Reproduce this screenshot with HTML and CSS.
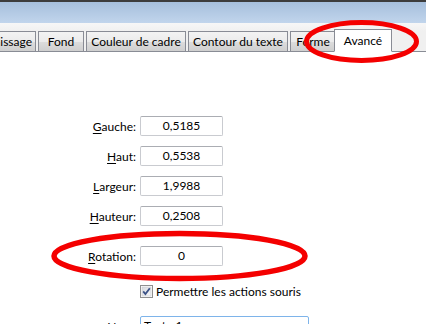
FILE: index.html
```html
<!DOCTYPE html>
<html lang="fr">
<head>
    <meta charset="UTF-8">
    <meta name="viewport" content="width=device-width, initial-scale=1.0">
    <title>Propriétés - Avancé</title>
    <link rel="stylesheet" href="styles.css">
</head>
<body>
    <div class="window">
        <div class="titlebar"></div>
        <div class="tabstrip">
            <div class="tabs">
                <span class="tab tab-first">Remplissage</span>
                <span class="tab tab-short">Fond</span>
                <span class="tab tab-long">Couleur de cadre</span>
                <span class="tab tab-long">Contour du texte</span>
                <span class="tab tab-short">Forme</span>
                <span class="tab active">Avancé</span>
            </div>
        </div>
        <div class="panel">
            <div class="row">
                <label class="label"><u>G</u>auche:</label>
                <div class="input">0,5185</div>
            </div>
            <div class="row">
                <label class="label"><u>H</u>aut:</label>
                <div class="input">0,5538</div>
            </div>
            <div class="row">
                <label class="label"><u>L</u>argeur:</label>
                <div class="input">1,9988</div>
            </div>
            <div class="row">
                <label class="label"><u>H</u>auteur:</label>
                <div class="input">0,2508</div>
            </div>
            <div class="row row-spaced">
                <label class="label"><u>R</u>otation:</label>
                <div class="input">0</div>
            </div>
            <div class="row row-check">
                <span class="label"></span>
                <div class="check">
                    <svg class="checkbox" width="13" height="13" viewBox="0 0 13 13">
                        <defs>
                            <linearGradient id="cb" x1="0" y1="0" x2="1" y2="1">
                                <stop offset="0" stop-color="#d6d9de"/>
                                <stop offset="1" stop-color="#f7f8fa"/>
                            </linearGradient>
                        </defs>
                        <rect x="0.5" y="0.5" width="12" height="12" fill="#fff" stroke="#8e8f8f"/>
                        <rect x="2" y="2" width="9" height="9" fill="url(#cb)" stroke="#c6c8cc" stroke-width="0.6"/>
                        <path d="M3.2 6.4 L5.4 9 L9.8 3.2" fill="none" stroke="#3b5287" stroke-width="1.8"/>
                    </svg>
                    <span>Permettre les actions souris</span>
                </div>
            </div>
            <div class="row row-name">
                <label class="label"><u>N</u>om:</label>
                <div class="input input-wide">Texte 1</div>
            </div>
        </div>
        <svg class="marks" width="426" height="324" viewBox="0 0 426 324">
            <ellipse cx="361.5" cy="41.5" rx="55" ry="19" fill="none" stroke="#f40000" stroke-width="5"/>
            <ellipse cx="179.5" cy="256" rx="125.5" ry="22.5" fill="none" stroke="#f40000" stroke-width="5.5"/>
        </svg>
    </div>
</body>
</html>
```

FILE: styles.css
```css
* {
    margin: 0;
    padding: 0;
    box-sizing: border-box;
}

body {
    font-family: Lato, 'Noto Sans', sans-serif;
    font-size: 12px;
    color: #000;
    background: #fff;
}

.window {
    position: relative;
    width: 426px;
    height: 324px;
    overflow: hidden;
    background: #fff;
}

.titlebar {
    height: 23px;
    border-top: 2px solid #3c3c3c;
    background: linear-gradient(180deg, #a6bfdc, #c1d5ec);
}

.tabstrip {
    height: 29px;
    background: linear-gradient(180deg, #f7f7f7, #f0f0f0 30%);
    border-bottom: 1px solid #898c95;
    display: flex;
    align-items: flex-end;
}

.tabs {
    display: flex;
    align-items: flex-end;
    gap: 2px;
    margin-left: -44px;
    margin-bottom: -1px;
}

.tab {
    height: 21px;
    line-height: 19px;
    text-align: center;
    border: 1px solid #898c95;
    background: linear-gradient(180deg, #f3f3f3 0%, #ebebeb 50%, #dddddd 51%, #cfcfcf 100%);
    white-space: nowrap;
    overflow: hidden;
}

.tab-first {
    width: 80px;
    text-align: right;
    padding-right: 3px;
}

.tab-short {
    width: 46px;
}

.tab-long {
    width: 100px;
}

.tab.active {
    width: 58px;
    height: 23px;
    margin-left: -4px;
    line-height: 21px;
    background: #fff;
    border-bottom-color: #fff;
    position: relative;
}

.panel {
    padding-top: 64px;
}

.row {
    display: flex;
    align-items: center;
    gap: 4px;
    height: 20px;
    margin-top: 10px;
}

.row:first-child {
    margin-top: 0;
}

.row-spaced {
    margin-top: 20px;
}

.row-check {
    height: 14px;
    margin-top: 18px;
}

.row-name {
    margin-top: 18px;
}

.label {
    width: 136px;
    text-align: right;
    flex-shrink: 0;
}

.label u {
    text-underline-offset: 2px;
}

.input {
    width: 83px;
    height: 20px;
    border: 1px solid #c9cbd0;
    border-top-color: #abadb3;
    border-radius: 2px;
    text-align: center;
    line-height: 18px;
    background: #fff;
}

.input-wide {
    width: 169px;
    text-align: left;
    padding-left: 3px;
    border-color: #7eb4ea;
}

.check {
    display: flex;
    align-items: center;
    gap: 3px;
    white-space: nowrap;
}

.checkbox {
    display: block;
}

.marks {
    position: absolute;
    top: 0;
    left: 0;
    pointer-events: none;
}
```
